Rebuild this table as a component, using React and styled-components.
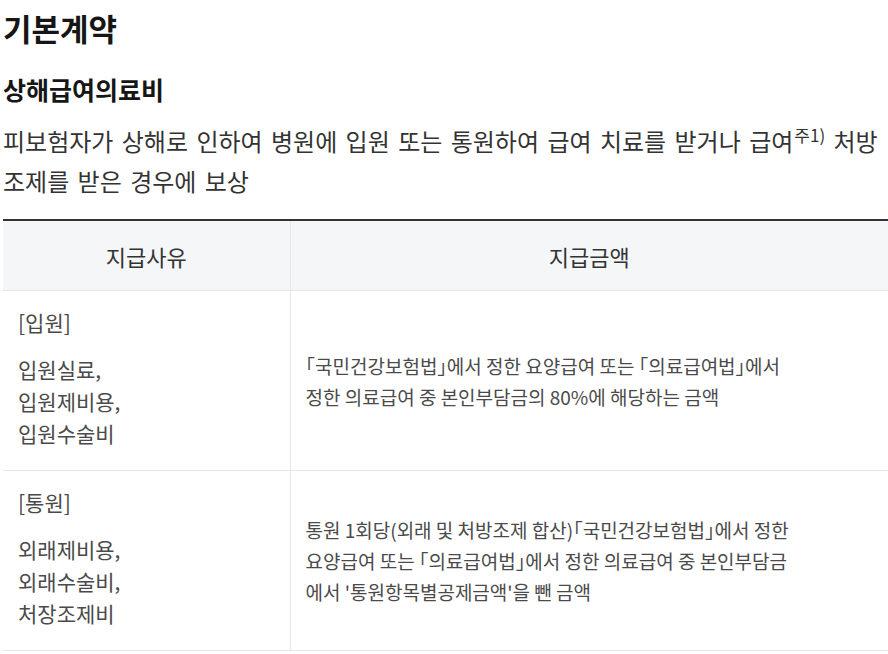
import React from "react";
import styled, { createGlobalStyle } from "styled-components";

const Global = createGlobalStyle`
  html, body { margin: 0; padding: 0; background: #fff; }
  body {
    font-family: "Noto Sans CJK KR", "Noto Sans", sans-serif;
    color: #222;
    overflow: hidden;
  }
`;

const Page = styled.div`
  padding: 0 0 0 3px;
  width: 885px;
`;

const Title = styled.h2`
  margin: 0;
  padding-top: 8px;
  font-size: 31px;
  line-height: 40px;
  font-weight: 700;
  color: #161616;
`;

const SubTitle = styled.h3`
  margin: 25px 0 0;
  font-size: 25px;
  line-height: 32px;
  font-weight: 700;
  color: #161616;
`;

const Desc = styled.p`
  margin: 16px 0 0;
  font-size: 24px;
  line-height: 40px;
  word-spacing: 3px;
  word-break: keep-all;
  color: #333;
`;

const Sup = styled.sup`
  font-size: 17px;
  line-height: 0;
  vertical-align: 9px;
  word-spacing: 0;
  margin-left: 1px;
`;

const Table = styled.table`
  margin-top: 18px;
  width: 885px;
  border-collapse: collapse;
  border-top: 2px solid #333;
  table-layout: fixed;
`;

const Col = styled.col`
  width: ${(p) => p.$w || "auto"};
`;

const Th = styled.th`
  height: 69px;
  padding: 0;
  background: #f5f6f8;
  font-size: 22px;
  font-weight: 400;
  color: #333;
  text-align: center;
  border-bottom: 1px solid #e6e7eb;
  border-left: ${(p) => (p.$first ? "none" : "1px solid #e6e7eb")};
`;

const ReasonCell = styled.td`
  height: 164px;
  padding: 15px 16px 0 15px;
  vertical-align: top;
  font-size: 21px;
  line-height: 32px;
  color: #4a4a4a;
  border-bottom: 1px solid #e6e7eb;
`;

const AmountCell = styled.td`
  height: 179px;
  padding: 0 92px 0 15px;
  vertical-align: middle;
  font-size: 19px;
  line-height: 31px;
  color: #4a4a4a;
  font-feature-settings: "halt" 1;
  border-bottom: 1px solid #e6e7eb;
  border-left: 1px solid #e6e7eb;
`;

const Label = styled.div`
  margin-bottom: 15px;
`;

const Item = styled.div``;

const rows = [
  {
    label: "[입원]",
    items: ["입원실료,", "입원제비용,", "입원수술비"],
    amount:
      "「국민건강보험법」에서 정한 요양급여 또는 「의료급여법」에서 정한 의료급여 중 본인부담금의 80%에 해당하는 금액",
  },
  {
    label: "[통원]",
    items: ["외래제비용,", "외래수술비,", "처장조제비"],
    amount:
      "통원 1회당(외래 및 처방조제 합산)「국민건강보험법」에서 정한 요양급여 또는 「의료급여법」에서 정한 의료급여 중 본인부담금에서 '통원항목별공제금액'을 뺀 금액",
  },
];

export default function App() {
  return (
    <>
      <Global />
      <Page>
        <Title>기본계약</Title>
        <SubTitle>상해급여의료비</SubTitle>
        <Desc>
          피보험자가 상해로 인하여 병원에 입원 또는 통원하여 급여 치료를 받거나 급여
          <Sup>주1)</Sup> 처방 조제를 받은 경우에 보상
        </Desc>
        <Table>
          <colgroup>
            <Col $w="287px" />
            <Col />
          </colgroup>
          <thead>
            <tr>
              <Th $first>지급사유</Th>
              <Th>지급금액</Th>
            </tr>
          </thead>
          <tbody>
            {rows.map((r) => (
              <tr key={r.label}>
                <ReasonCell>
                  <Label>{r.label}</Label>
                  {r.items.map((it) => (
                    <Item key={it}>{it}</Item>
                  ))}
                </ReasonCell>
                <AmountCell>{r.amount}</AmountCell>
              </tr>
            ))}
          </tbody>
        </Table>
      </Page>
    </>
  );
}
